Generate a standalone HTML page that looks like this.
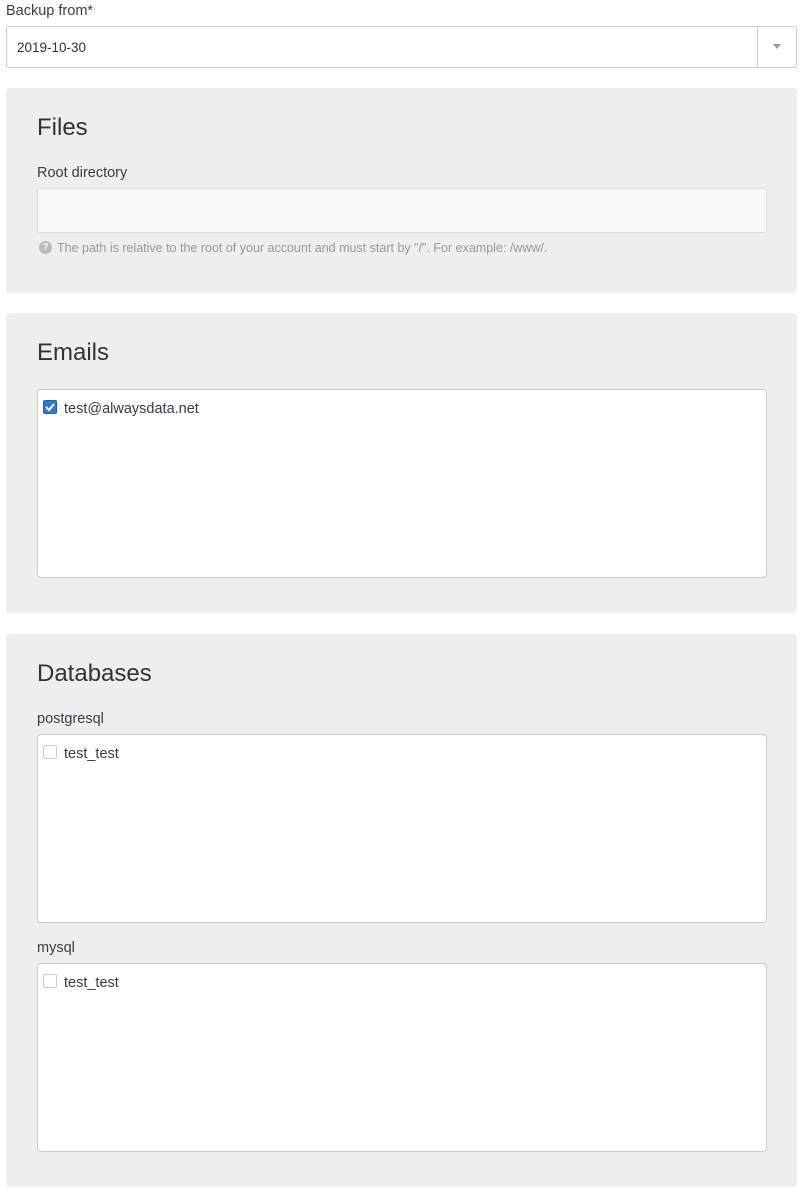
<!DOCTYPE html>
<html><head><style>
body{margin:0;background:#fff;font-family:"Liberation Sans",sans-serif;color:#333;width:809px;height:1203px;position:relative;overflow:hidden}
.a{position:absolute}
.lbl{font-size:14.5px;color:#3a3a4a}
.panel{position:absolute;left:6px;width:791px;background:#eee;border-radius:4px}
.h{position:absolute;left:31px;font-size:24px;color:#333}
.box{position:absolute;left:31px;width:728px;background:#fff;border:1px solid #ccc;border-radius:4px}
.cb{position:absolute;left:5px;top:10px;width:14px;height:14px;border:1px solid #ccc;border-radius:2px;background:#fff;box-sizing:border-box}
.it{position:absolute;left:26px;top:11px;font-size:14.5px;color:#3a3a4a}
</style></head><body>
<div class="a lbl" style="left:6px;top:3px">Backup from*</div>
<div class="a" style="left:6px;top:26px;width:789px;height:40px;border:1px solid #ccc;border-radius:3px;background:#fff">
<div class="a" style="left:10px;top:13px;font-size:13.5px;color:#333">2019-10-30</div>
<div class="a" style="left:750px;top:0;width:1px;height:40px;background:#ccc"></div>
<div class="a" style="left:766px;top:17px;width:0;height:0;border-left:4px solid transparent;border-right:4px solid transparent;border-top:5px solid #999"></div>
</div>
<div class="panel" style="top:88px;height:205px">
<div class="h" style="top:26px">Files</div>
<div class="a lbl" style="left:31px;top:77px">Root directory</div>
<div class="a" style="left:31px;top:100px;width:728px;height:43px;border:1px solid #ddd;border-radius:3px;background:#f9f9f9"></div>
<div class="a" style="left:33px;top:153px;width:13px;height:13px;border-radius:50%;background:#bbb;color:#fff;font-size:10px;font-weight:bold;text-align:center;line-height:13px">?</div>
<div class="a" style="left:51px;top:153px;font-size:12.5px;color:#999">The path is relative to the root of your account and must start by "/". For example: /www/.</div>
</div>
<div class="panel" style="top:313px;height:300px">
<div class="h" style="top:26px">Emails</div>
<div class="box" style="top:76px;height:187px">
<div class="cb" style="background:#2f7ad8;border-color:#1d5fb0"><svg width="14" height="14" style="position:absolute;left:-1px;top:-1px"><path d="M3 7l3 3 5-6" stroke="#fff" stroke-width="2" fill="none"/></svg></div>
<div class="it">test@alwaysdata.net</div>
</div>
</div>
<div class="panel" style="top:634px;height:553px">
<div class="h" style="top:26px">Databases</div>
<div class="a lbl" style="left:31px;top:77px">postgresql</div>
<div class="box" style="top:100px;height:187px"><div class="cb"></div><div class="it">test_test</div></div>
<div class="a lbl" style="left:31px;top:306px">mysql</div>
<div class="box" style="top:329px;height:187px"><div class="cb"></div><div class="it">test_test</div></div>
</div>
</body></html>
